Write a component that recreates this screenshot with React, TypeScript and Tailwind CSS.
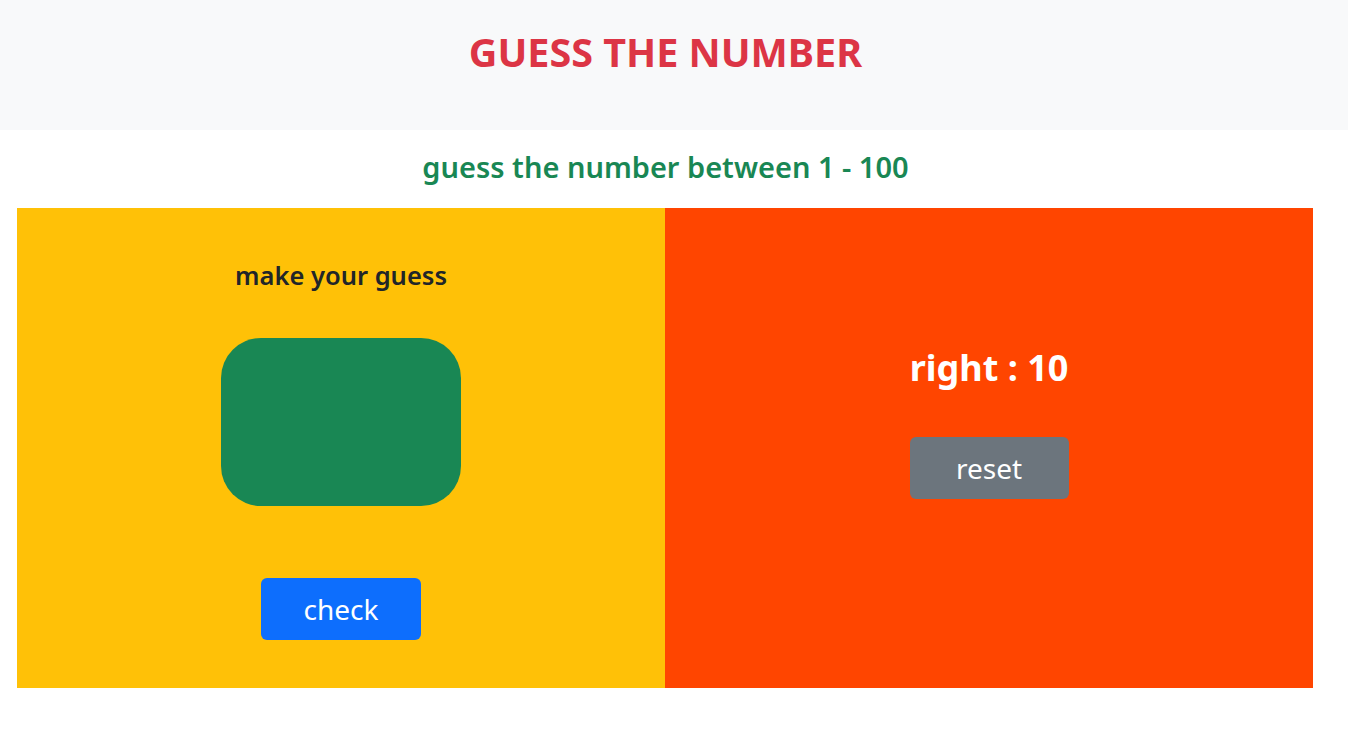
import React, { useState } from 'react';

const font = { fontFamily: '"Noto Sans", "Open Sans", sans-serif' };

export default function App() {
  const [guess, setGuess] = useState('');
  const [right] = useState(10);

  return (
    <div className="min-h-screen bg-white" style={font}>
      {/* Header */}
      <header className="h-[130px] bg-[#f8f9fa] pt-[28px] pr-[17px]">
        <h1 className="text-center text-[39.5px] leading-[48px] font-bold text-[#dc3545]">GUESS THE NUMBER</h1>
      </header>

      <h3 className="mt-[20px] pr-[17px] text-center text-[29px] leading-[34px] font-semibold text-[#198754]">
        guess the number between 1 - 100
      </h3>

      {/* Game board */}
      <div className="ml-[17px] mt-[24px] flex h-[480px] w-[1296px]">
        <div className="flex w-1/2 flex-col items-center bg-[#ffc107] pt-[53px]">
          <h4 className="text-[25.5px] leading-[29px] font-semibold text-[#212529]">make your guess</h4>
          <input
            value={guess}
            onChange={(e) => setGuess(e.target.value)}
            className="mt-[48px] h-[168px] w-[240px] rounded-[40px] bg-[#198754] text-center text-[40px] text-white outline-none"
          />
          <button className="mt-[72px] h-[62px] w-[160px] rounded-[6px] bg-[#0d6efd] text-[28px] text-white">check</button>
        </div>

        <div className="flex w-1/2 flex-col items-center bg-[#ff4500] pt-[138px]">
          <h2 className="text-[36px] leading-[43px] font-bold text-white">right : {right}</h2>
          <button className="mt-[48px] h-[62px] w-[159px] rounded-[6px] bg-[#6c757d] text-[28px] text-white">reset</button>
        </div>
      </div>
    </div>
  );
}
